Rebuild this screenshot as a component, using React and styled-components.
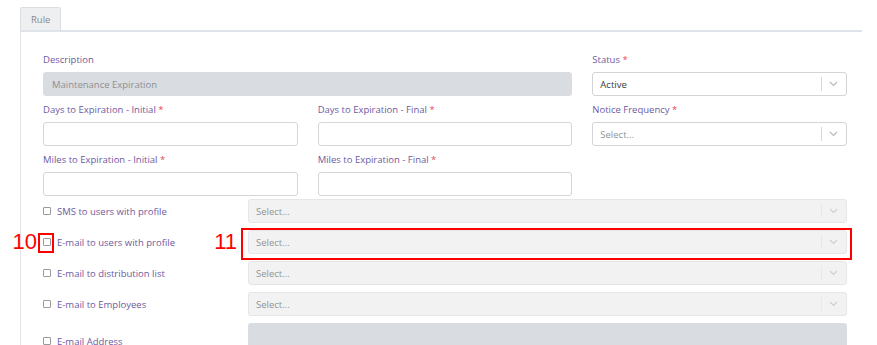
import styled, { createGlobalStyle } from "styled-components";

const GlobalStyle = createGlobalStyle`
  html, body {
    margin: 0;
    padding: 0;
    background: #fff;
    font-family: "Open Sans", "Noto Sans", sans-serif;
  }
`;

const Chevron = ({ color }) => (
  <svg width="9" height="6" viewBox="0 0 9 6">
    <path d="M1 1l3.5 3.5L8 1" fill="none" stroke={color} strokeWidth="1.1" />
  </svg>
);

const SelectBox = ({ value, disabled }) => (
  <Select disabled={disabled}>
    <SelectValue placeholder={!value}>{value || "Select..."}</SelectValue>
    <Indicator>
      <Sep disabled={disabled} />
      <Chevron color={disabled ? "#cfcfcf" : "#b8b8b8"} />
    </Indicator>
  </Select>
);

const App = () => {
  return (
    <Page>
      <GlobalStyle />
      <TabBar>
        <Tab>Rule</Tab>
        <TabLine />
      </TabBar>
      <Panel>
        <Grid>
          <Field span={2}>
            <Label>Description</Label>
            <TextBox disabled>Maintenance Expiration</TextBox>
          </Field>
          <Field>
            <Label>Status <Req>*</Req></Label>
            <SelectBox value="Active" />
          </Field>

          <Field>
            <Label>Days to Expiration - Initial <Req>*</Req></Label>
            <TextBox />
          </Field>
          <Field>
            <Label>Days to Expiration - Final <Req>*</Req></Label>
            <TextBox />
          </Field>
          <Field>
            <Label>Notice Frequency <Req>*</Req></Label>
            <SelectBox />
          </Field>

          <Field>
            <Label>Miles to Expiration - Initial <Req>*</Req></Label>
            <TextBox />
          </Field>
          <Field>
            <Label>Miles to Expiration - Final <Req>*</Req></Label>
            <TextBox />
          </Field>
        </Grid>

        <Checks>
          <CheckRow>
            <CheckLabel>
              <Box />
              SMS to users with profile
            </CheckLabel>
            <SelectBox disabled />
          </CheckRow>
          <CheckRow>
            <CheckLabel>
              <Marked>
                <Box />
                <Outline style={{ top: -5, left: -5, right: -3, bottom: -7 }} />
                <Num>10</Num>
              </Marked>
              E-mail to users with profile
            </CheckLabel>
            <Marked>
              <SelectBox disabled />
              <Outline style={{ top: -2, left: -7, right: -5, bottom: -6 }} />
              <Num gap={11}>11</Num>
            </Marked>
          </CheckRow>
          <CheckRow>
            <CheckLabel>
              <Box />
              E-mail to distribution list
            </CheckLabel>
            <SelectBox disabled />
          </CheckRow>
          <CheckRow>
            <CheckLabel>
              <Box />
              E-mail to Employees
            </CheckLabel>
            <SelectBox disabled />
          </CheckRow>
          <CheckRow>
            <CheckLabel>
              <Box />
              E-mail Address
            </CheckLabel>
            <AddressBox />
          </CheckRow>
        </Checks>
      </Panel>
    </Page>
  );
};

const Page = styled.div`
  padding: 7px 15px 0 20px;
  height: 345px;
  box-sizing: border-box;
  overflow: hidden;
`;

const TabBar = styled.div`
  display: flex;
  align-items: flex-end;
`;

const Tab = styled.div`
  height: 25px;
  box-sizing: border-box;
  padding: 1px 10px 0;
  display: flex;
  align-items: center;
  font-size: 9.5px;
  color: #8a8a8a;
  background: #eeeff1;
  border: 1px solid #dcdde0;
  border-bottom: 2px solid #dfe4ea;
  border-radius: 2px 2px 0 0;
`;

const TabLine = styled.div`
  flex: 1;
  border-bottom: 2px solid #dfe4ea;
`;

const Panel = styled.div`
  border-left: 1px solid #e4e4e6;
  padding: 22px 15px 0 22px;
`;

const Grid = styled.div`
  display: grid;
  grid-template-columns: repeat(3, 1fr);
  column-gap: 20px;
  row-gap: 8px;
`;

const Field = styled.div`
  display: flex;
  flex-direction: column;
  grid-column: span ${(p) => p.span || 1};
`;

const Label = styled.div`
  font-size: 9.5px;
  line-height: 12px;
  color: #6e5aa2;
  margin-bottom: 6px;
  white-space: nowrap;
`;

const Req = styled.span`
  color: #e5475a;
`;

const TextBox = styled.div`
  height: 24px;
  box-sizing: border-box;
  border-radius: 3px;
  border: 1px solid ${(p) => (p.disabled ? "#d9dce0" : "#d6d6da")};
  background: ${(p) => (p.disabled ? "#d9dce0" : "#fff")};
  padding: 0 8px;
  display: flex;
  align-items: center;
  font-size: 9.5px;
  color: #8e9094;
`;

const Select = styled.div`
  height: 24px;
  box-sizing: border-box;
  border-radius: 3px;
  border: 1px solid ${(p) => (p.disabled ? "#e6e6e6" : "#d4d4d8")};
  background: ${(p) => (p.disabled ? "#f2f2f2" : "#fff")};
  display: flex;
  align-items: center;
  padding-left: 7px;
`;

const SelectValue = styled.div`
  flex: 1;
  font-size: 9.5px;
  color: ${(p) => (p.placeholder ? "#939393" : "#3a3a3a")};
`;

const Indicator = styled.div`
  display: flex;
  align-items: center;
  gap: 7px;
  padding-right: 8px;
`;

const Sep = styled.div`
  width: 1px;
  height: 14px;
  background: ${(p) => (p.disabled ? "#e8e8e8" : "#d8d8d8")};
`;

const Checks = styled.div`
  display: flex;
  flex-direction: column;
  gap: 7px;
  margin-top: 3px;
`;

const CheckRow = styled.div`
  display: grid;
  grid-template-columns: 205px 1fr;
  align-items: center;
`;

const CheckLabel = styled.label`
  display: flex;
  align-items: center;
  gap: 6px;
  font-size: 9.5px;
  color: #6e5aa2;
`;

const Box = styled.span`
  display: block;
  width: 8px;
  height: 8px;
  box-sizing: border-box;
  border: 1px solid #9a9a9a;
  border-radius: 1px;
  background: #fff;
`;

const Marked = styled.div`
  position: relative;
`;

const Outline = styled.div`
  position: absolute;
  border: 2px solid #ff0000;
  pointer-events: none;
`;

const Num = styled.span`
  position: absolute;
  right: calc(100% + ${(p) => p.gap || 6}px);
  top: 50%;
  transform: translateY(-50%);
  font-family: "Liberation Sans", Arial, sans-serif;
  font-size: 22px;
  line-height: 22px;
  color: #ff0000;
`;

const AddressBox = styled.div`
  height: 36px;
  border-radius: 3px;
  background: #d9dce0;
`;

export default App;
